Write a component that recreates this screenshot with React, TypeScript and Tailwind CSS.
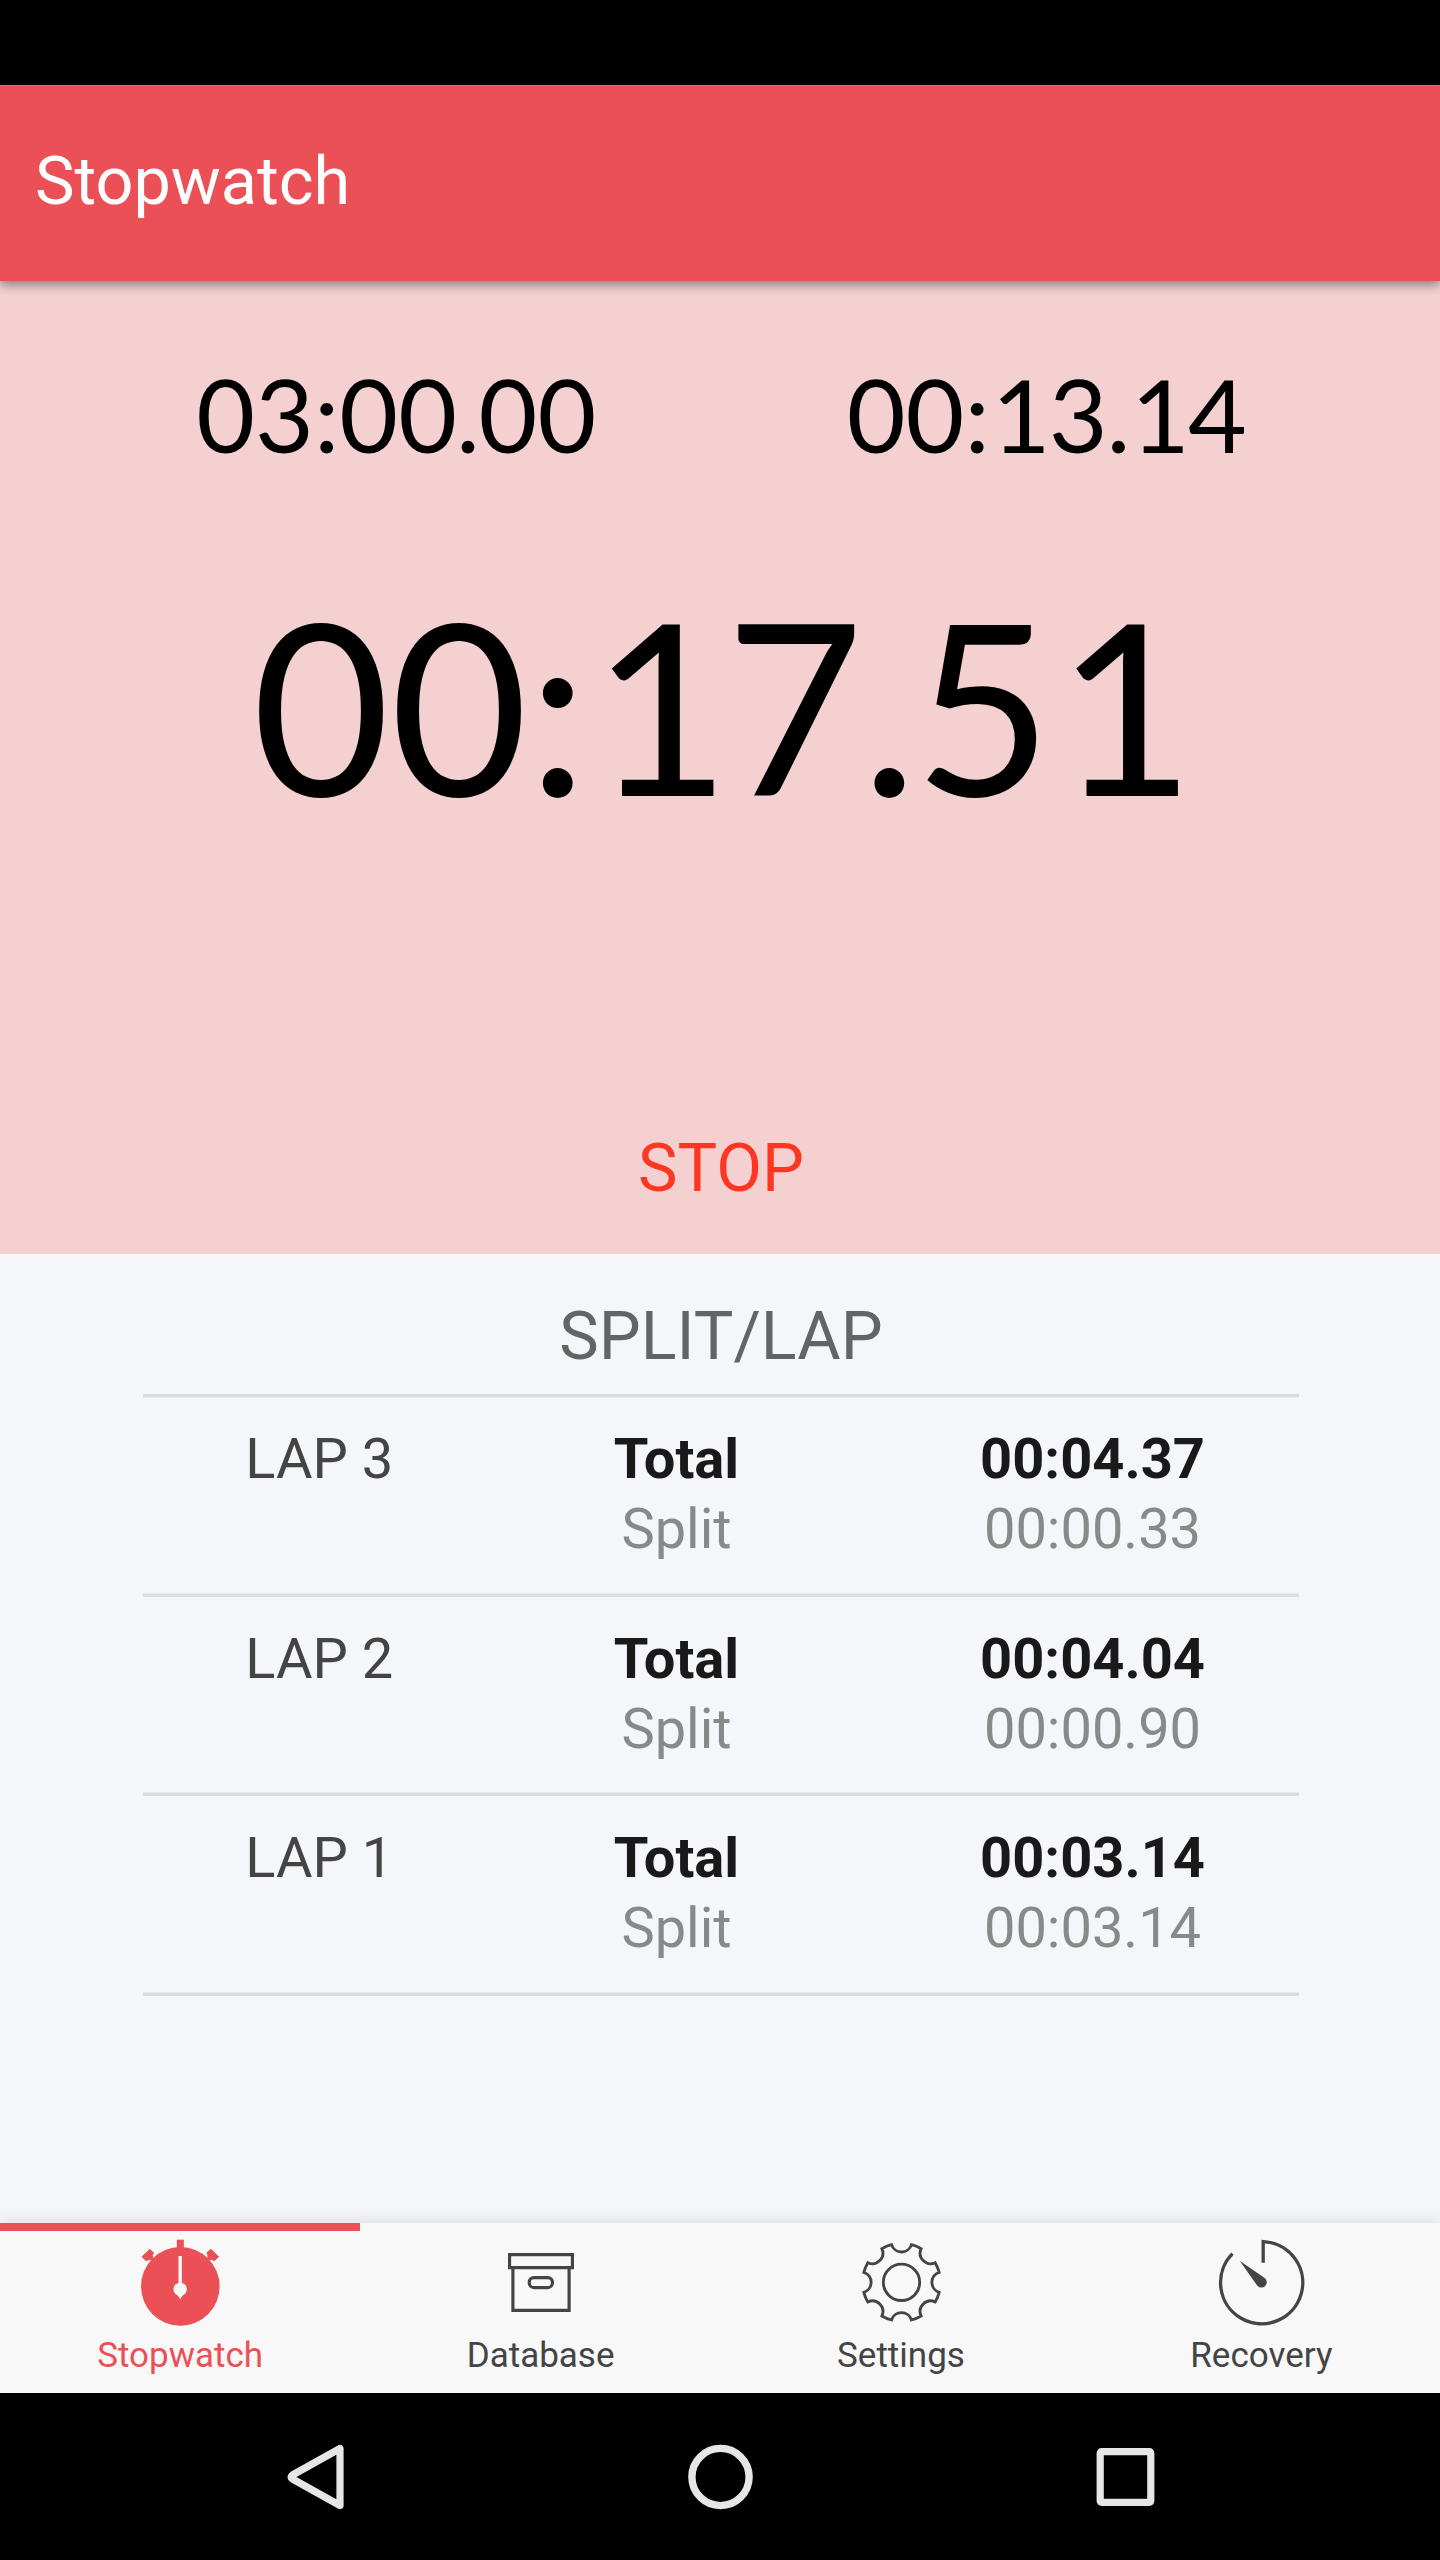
import type { ReactNode } from "react";

const laps = [
  { name: "LAP 3", total: "00:04.37", split: "00:00.33" },
  { name: "LAP 2", total: "00:04.04", split: "00:00.90" },
  { name: "LAP 1", total: "00:03.14", split: "00:03.14" },
];

// Clock digits with slightly tightened spacing round the decimal point.
function Time({ value }: { value: string }) {
  return (
    <>
      {[...value].map((ch, i) =>
        ch === "." ? (
          <span key={i} className="-mr-[0.014em] -ml-[0.01em]">.</span>
        ) : ch === "1" ? (
          <span key={i} className="-mr-[0.02em] ml-[0.02em]">1</span>
        ) : (
          ch
        ),
      )}
    </>
  );
}

function StopwatchIcon() {
  return (
    <svg viewBox="360.5 105 360 300" className="h-[100px] w-[120px]" fill="#eb5057">
      <circle cx="541.5" cy="259" r="118" />
      <rect x="531" y="119" width="21" height="28" />
      <path d="M425 170 450 146 463 159 459 164 460 178 452 181 447 179 439 184Z" />
      <path d="M658 170 633 146 619 159 623 164 622 178 630 181 636 179 643 184Z" />
      <path d="M536 168h10v82h-10zM533 284h16l-8 14z" fill="#f8f8f8" />
      <circle cx="541" cy="268" r="20" fill="#f8f8f8" />
    </svg>
  );
}

function ArchiveIcon() {
  return (
    <svg viewBox="153 75 360 300" className="h-[100px] w-[120px]" fill="none" stroke="#444" strokeWidth="9.5">
      <path d="M238.7 133.7h188.6v39H238.7zM248.7 172.7v128.5h168.6V172.7" />
      <rect x="297.7" y="202.7" width="69.6" height="30" rx="14" />
    </svg>
  );
}

function GearIcon() {
  return (
    <svg viewBox="123 75 360 300" className="h-[100px] w-[120px]" fill="none" stroke="#444" strokeWidth="8.5">
      <g transform="translate(304.5 217)">
        <circle r="54.5" />
        <path d="M-30-113A31.5 31.5 0 0 0 30-113A117 117 0 0 1 59-101A31.5 31.5 0 0 0 101-59A117 117 0 0 1 113-30A31.5 31.5 0 0 0 113 30A117 117 0 0 1 101 59A31.5 31.5 0 0 0 59 101A117 117 0 0 1 30 113A31.5 31.5 0 0 0-30 113A117 117 0 0 1-59 101A31.5 31.5 0 0 0-101 59A117 117 0 0 1-113 30A31.5 31.5 0 0 0-113-30A117 117 0 0 1-101-59A31.5 31.5 0 0 0-59-101A117 117 0 0 1-30-113Z" />
      </g>
    </svg>
  );
}

function TimerIcon() {
  return (
    <svg viewBox="123 75 360 300" className="h-[100px] w-[120px]">
      <path d="M309.5 158V94.7A123.3 123.3 0 1 1 217.5 131" fill="none" stroke="#444" strokeWidth="10" />
      <path d="M239 152L314 204A16 16 0 1 1 292 227Z" fill="#444" />
    </svg>
  );
}

function Tab({ label, icon, active = false }: { label: string; icon: ReactNode; active?: boolean }) {
  return (
    <div className={`flex w-[360.4px] shrink-0 flex-col items-center border-t-[8px] pt-[4px] ${active ? "border-[#eb5057] text-[#eb5057]" : "border-transparent text-[#444]"}`}>
      {icon}
      <span className="mt-px text-[35px] leading-[40px]">{label}</span>
    </div>
  );
}

export default function App() {
  return (
    <div className="flex h-[2560px] w-[1440px] flex-col overflow-hidden bg-black font-['Roboto',sans-serif]">
      <div className="h-[85px] shrink-0" />
      <header className="relative h-[196px] shrink-0 border-t border-[#ea6a70] bg-[#eb5057] pt-[55px] pl-[35px] shadow-[0_4px_10px_rgba(0,0,0,0.4)]">
        <h1 className="text-[66.5px] leading-[80px] text-white">Stopwatch</h1>
      </header>
      <section className="h-[973px] shrink-0 bg-[#f4d0d0] text-center text-black">
        <div className="flex pt-[72px] pl-[71px] font-['Lato',sans-serif] text-[101.5px] leading-[122px]">
          <div className="w-[650.5px]"><Time value="03:00.00" /></div>
          <div className="w-[650.5px]"><Time value="00:13.14" /></div>
        </div>
        <div className="mt-[89px] h-[280px] w-[1442px] font-['Lato',sans-serif] text-[238px] leading-[280px]">
          <Time value="00:17.51" />
        </div>
        <div className="mt-[284px] w-[1442px] text-[66.5px] leading-[80px] text-[#ff3722]">STOP</div>
      </section>
      <section className="h-[969px] shrink-0 bg-[#f5f6fa] pt-[42px] pl-[143px]">
        <h2 className="w-[1156px] text-center text-[66.5px] leading-[80px] text-[#636465]">SPLIT/LAP</h2>
        <div className="mt-[18px] w-[1156px] border-t-[3px] border-[#dcdddd] shadow-[inset_0_1px_0_#e9eaeb]">
          {laps.map((lap) => (
            <div key={lap.name} className="grid h-[199.7px] grid-cols-[352.5px_362px_442px] border-b-[3px] border-[#dcdddd] pt-[27px] text-center text-[56px] leading-[70px] shadow-[inset_0_-1px_0_#e9eaeb]">
              <div className="text-[#444]">{lap.name}</div>
              <div>
                <div className="font-bold text-[#191919]">Total</div>
                <div className="text-[#888989]">Split</div>
              </div>
              <div className="pl-[28px]">
                <div className="font-bold text-[#191919]">{lap.total}</div>
                <div className="text-[#888989]">{lap.split}</div>
              </div>
            </div>
          ))}
        </div>
      </section>
      <nav className="relative flex h-[170px] shrink-0 bg-[#f8f8f8] shadow-[0_-2px_14px_rgba(0,0,0,0.1)]">
        <Tab label="Stopwatch" icon={<StopwatchIcon />} active />
        <Tab label="Database" icon={<ArchiveIcon />} />
        <Tab label="Settings" icon={<GearIcon />} />
        <Tab label="Recovery" icon={<TimerIcon />} />
      </nav>
      <footer className="flex h-[167px] shrink-0 items-center bg-black pt-px pl-[113px]">
        <div className="flex w-[405px] justify-center">
          <svg viewBox="-36 -36 72 72" className="h-[72px] w-[72px]" fill="none" stroke="#e6e6e6" strokeWidth="7.2" strokeLinejoin="round">
            <path d="M24-28.5V28.5L-23.5 2Q-26.5 0-23.5-2Z" />
          </svg>
        </div>
        <div className="flex w-[405px] justify-center">
          <svg viewBox="-35.5 -36 72 72" className="h-[72px] w-[72px]" fill="none" stroke="#e6e6e6" strokeWidth="7.4">
            <circle r="28.6" />
          </svg>
        </div>
        <div className="flex w-[405px] justify-center">
          <svg viewBox="-35.5 -36 72 72" className="h-[72px] w-[72px]" fill="none" stroke="#e6e6e6" strokeWidth="7.2">
            <rect x="-25.3" y="-25.3" width="50.6" height="50.6" rx="1.5" />
          </svg>
        </div>
      </footer>
    </div>
  );
}
